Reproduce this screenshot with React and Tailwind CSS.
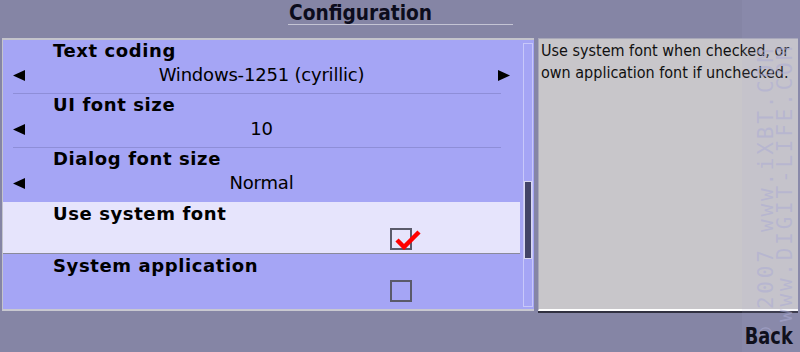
import React from 'react'

const LeftArrow = () => (
  <svg width="12" height="11" viewBox="0 0 12 11" className="block">
    <path d="M0 5.5 L12 0 L12 11 Z" fill="#000" />
  </svg>
)

const RightArrow = () => (
  <svg width="12" height="11" viewBox="0 0 12 11" className="block">
    <path d="M12 5.5 L0 0 L0 11 Z" fill="#000" />
  </svg>
)

const Checkbox = ({ checked }) => (
  <div className="relative w-[22px] h-[22px] border-2 border-[#5a5a6a]">
    {checked && (
      <svg width="30" height="22" viewBox="0 0 30 22" className="absolute left-[2px] top-[-2px]">
        <path d="M3 12 L10 19 L25 4" stroke="#ff0000" strokeWidth="4.5" fill="none" />
      </svg>
    )}
  </div>
)

const ChoiceRow = ({ label, value, next, sep }) => (
  <div className="h-[54px] flex flex-col relative">
    <div className="h-[22px] pl-[50px] text-[18px] leading-[22px] font-bold tracking-[0.6px]">{label}</div>
    <div className="h-[26px] flex items-center px-[10px]">
      <LeftArrow />
      <div className="flex-1 text-center text-[18px] leading-[26px] tracking-[-0.2px]">{value}</div>
      {next ? <RightArrow /> : <div className="w-[12px]" />}
    </div>
    {sep && <div className="ml-[10px] mr-[19px] mt-auto h-px bg-[#8e8ed8]" />}
  </div>
)

const CheckRow = ({ label, checked, selected }) => (
  <div className={selected ? 'h-[52px] flex flex-col bg-[#e6e4fc] border-b border-[#8a8a9a]' : 'h-[55px] flex flex-col'}>
    <div className="h-[22px] pl-[50px] text-[18px] leading-[22px] font-bold tracking-[0.6px] mt-[1px]">{label}</div>
    <div className="flex-1 flex items-start pt-[3px] pl-[387px]">
      <Checkbox checked={checked} />
    </div>
  </div>
)

const condensed = { fontFamily: '"DejaVu Sans Condensed", "DejaVu Sans", sans-serif' }
const mark = { fontFamily: '"DejaVu Sans Mono", monospace', color: 'rgba(172,172,212,0.55)' }

export default function App() {
  return (
    <div className="relative w-[800px] h-[352px] overflow-hidden bg-[#8585a5] text-black" style={{ fontFamily: '"DejaVu Sans", sans-serif' }}>
      <div className="h-[38px] flex justify-center">
        <div className="w-[225px] h-[25px] border-b border-[#c4c4d4] pl-[1px]">
          <div className="text-[22px] leading-[25px] font-bold text-[#0c0c1c] origin-left scale-x-[0.94] whitespace-nowrap" style={condensed}>Configuration</div>
        </div>
      </div>

      <div className="flex pl-[2px]">
        <div className="w-[532px] h-[273px] flex bg-[#a5a5f5] border-t-2 border-l border-[#c4c4cc] border-b-2 border-b-[#c8c8d0]">
          <div className="w-[517px] flex flex-col">
            <ChoiceRow label="Text coding" value="Windows-1251 (cyrillic)" next sep />
            <ChoiceRow label="UI font size" value="10" sep />
            <ChoiceRow label="Dialog font size" value="Normal" />
            <CheckRow label="Use system font" checked selected />
            <CheckRow label="System application" />
          </div>
          <div className="ml-[3px] mt-[3px] w-[10px] h-[264px] border border-[#c8c8fa] flex flex-col">
            <div className="h-[137px]" />
            <div className="h-[78px] bg-[#424468] border border-[#d8d8f0]" />
          </div>
        </div>

        <div className="ml-[4px] w-[260px] h-[273px] bg-[#c8c6ca] border-l border-t border-[#a8a8b8] border-b-2 border-b-white shadow-[0_2px_0_#303040] px-[2px] pt-[1px]">
          <p className="text-[16px] leading-[22px] text-[#101010] whitespace-nowrap" style={condensed}>
            Use system font when checked, or<br />own application font if unchecked.
          </p>
        </div>
      </div>

      {/* watermark */}
      <div className="absolute left-[742px] top-0 w-[58px] h-full bg-[#b0b0d8]/10 pointer-events-none" />
      <div className="absolute left-[756px] top-[20px] w-[42px] h-[320px] pointer-events-none">
        <div className="absolute left-0 top-[320px] w-[320px] h-[20px] origin-top-left rotate-[-90deg] text-[21px] leading-[20px] tracking-[2.8px] whitespace-nowrap" style={mark}>
          © 2007 www.iXBT.COM
        </div>
        <div className="absolute left-[19px] top-[302px] w-[300px] h-[20px] origin-top-left rotate-[-90deg] text-[21px] leading-[20px] tracking-[2.8px] whitespace-nowrap" style={mark}>
          www.DIGIT-LIFE.COM
        </div>
      </div>

      <div className="absolute right-[7px] bottom-[3px] text-[23px] leading-[26px] font-bold text-[#10101c] origin-right scale-x-[0.86]" style={condensed}>
        Back
      </div>
    </div>
  )
}
